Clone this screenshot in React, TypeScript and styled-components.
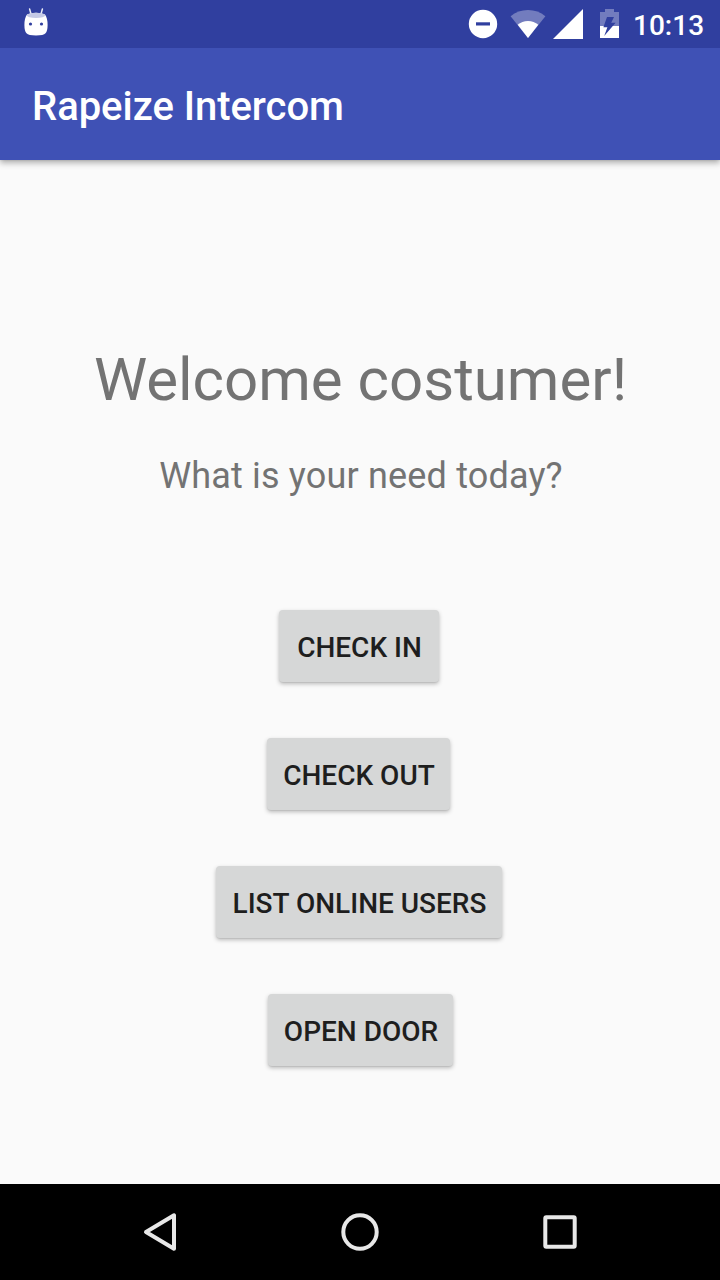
import React from 'react';
import styled, { createGlobalStyle } from 'styled-components';

const GlobalStyle = createGlobalStyle`
  body { margin: 0; background: #fafafa; }
  * { box-sizing: border-box; }
`;

const Screen = styled.div`
  width: 720px;
  height: 1280px;
  display: flex;
  flex-direction: column;
  overflow: hidden;
  background: #fafafa;
  font-family: Roboto, 'Liberation Sans', sans-serif;
`;

const StatusBar = styled.header`
  height: 48px;
  flex: none;
  z-index: 2;
  display: flex;
  justify-content: space-between;
  background: #303f9f;
  color: #fff;
`;

const StatusIcons = styled.svg`
  display: block;
  height: 48px;
  flex: none;
`;

const StatusGroup = styled.div`
  display: flex;
  padding-right: 16px;
`;

const Clock = styled.time`
  width: 71px;
  font-size: 28px;
  font-weight: 500;
  line-height: 52px;
  height: 48px;
  white-space: nowrap;
`;

const AppBar = styled.div`
  height: 112px;
  flex: none;
  z-index: 1;
  padding: 6px 32px 0;
  display: flex;
  align-items: center;
  background: #3f51b5;
  box-shadow: 0 3px 6px rgba(0, 0, 0, 0.3), 0 0 2px rgba(0, 0, 0, 0.12);
`;

const Title = styled.h1`
  margin: 0;
  color: #fff;
  font-size: 40px;
  font-weight: 500;
  line-height: 48px;
  letter-spacing: -0.04px;
`;

const Content = styled.main`
  flex: 1;
  display: flex;
  flex-direction: column;
  align-items: center;
  padding-top: 185px;
  color: #737373;
`;

const Heading = styled.h2`
  margin: 0;
  padding-left: 1px;
  font-size: 60px;
  font-weight: 400;
  line-height: 70px;
  white-space: nowrap;
`;

const Question = styled.p`
  margin: 40px 0 0;
  padding-left: 2px;
  font-size: 36px;
  line-height: 42px;
  letter-spacing: 0.17px;
  white-space: nowrap;
`;

const Actions = styled.div`
  align-self: stretch;
  display: flex;
  flex-direction: column;
  align-items: flex-start;
  gap: 56px;
  margin-top: 113px;
`;

const ActionButton = styled.button<{ $start: number; $width: number }>`
  width: ${({ $width }) => $width}px;
  height: 72px;
  margin: 0 0 0 ${({ $start }) => $start}px;
  padding: 4px 0 0 1px;
  border: 0;
  border-radius: 4px;
  background: #d6d7d7;
  color: #1e1e1e;
  box-shadow: 0 2px 4px rgba(0, 0, 0, 0.26), 0 1px 1px rgba(0, 0, 0, 0.06);
  font-family: inherit;
  font-size: 28px;
  font-weight: 500;
  line-height: 34px;
  white-space: nowrap;
`;

const NavBar = styled.nav`
  height: 96px;
  flex: none;
  display: flex;
  justify-content: center;
  align-items: center;
  gap: 152px;
  background: #000;
`;

const NavIcon = styled.svg`
  width: 48px;
  height: 48px;
  fill: none;
  stroke: #e8e8e8;
  stroke-width: 4;
  stroke-linejoin: round;
`;

const actions = [
  { label: 'CHECK IN', start: 279, width: 160 },
  { label: 'CHECK OUT', start: 267, width: 183 },
  { label: 'LIST ONLINE USERS', start: 216, width: 286 },
  { label: 'OPEN DOOR', start: 268, width: 185 },
];

export default function App() {
  return (
    <Screen>
      <GlobalStyle />
      <StatusBar>
        <StatusIcons width="60" viewBox="0 0 60 48">
          <path d="M31.3 15L29.6 9M40.7 15L42.4 9" stroke="#e8eaf5" strokeWidth="1.5" strokeLinecap="round" />
          <path d="M27 14.5Q36 11 45 14.5Q47.6 18 47.6 25Q47.6 31 45.5 33.3Q43.5 35.5 36 35.5Q28.5 35.5 26.5 33.3Q24.4 31 24.4 25Q24.4 18 27 14.5Z" fill="#fff" />
          <ellipse cx="36" cy="15.3" rx="9.3" ry="2.6" fill="#c5cae6" />
          <circle cx="30.5" cy="24" r="1.6" fill="#303f9f" />
          <circle cx="41.5" cy="24" r="1.6" fill="#303f9f" />
        </StatusIcons>
        <StatusGroup>
          <StatusIcons width="173" viewBox="460 0 173 48">
            <circle cx="483" cy="24" r="14.2" fill="#fff" />
            <rect x="476" y="22.3" width="14" height="3.2" fill="#303f9f" />
            <path d="M528 38L510.6 16.2Q518 10 528 10T545.4 16.2Z" fill="#fff" fillOpacity="0.32" />
            <path d="M528 38L517.7 24.8Q522 21 528 21T538.3 24.8Z" fill="#fff" />
            <path d="M553 39L583 9V39Z" fill="#fff" />
            <path d="M600 12H605V9H614V12H619V26H600Z" fill="#fff" fillOpacity="0.32" />
            <path d="M600 26H619V38H600Z" fill="#fff" />
            <path d="M607 17H614L611.2 22.8H615.6L604.2 36L607.4 27.3H603.4Z" fill="#303f9f" />
          </StatusIcons>
          <Clock>10:13</Clock>
        </StatusGroup>
      </StatusBar>
      <AppBar>
        <Title>Rapeize Intercom</Title>
      </AppBar>
      <Content>
        <Heading>Welcome costumer!</Heading>
        <Question>What is your need today?</Question>
        <Actions>
          {actions.map(({ label, start, width }) => (
            <ActionButton key={label} type="button" $start={start} $width={width}>
              {label}
            </ActionButton>
          ))}
        </Actions>
      </Content>
      <NavBar>
        <NavIcon viewBox="136 1208 48 48" aria-label="Back">
          <path d="M146 1232L174 1215.3V1248.7Z" />
        </NavIcon>
        <NavIcon viewBox="336 1208 48 48" aria-label="Home">
          <circle cx="360" cy="1232" r="16.7" />
        </NavIcon>
        <NavIcon viewBox="536 1208 48 48" aria-label="Recent apps">
          <rect x="545.3" y="1217.3" width="29.4" height="29.4" rx="1" />
        </NavIcon>
      </NavBar>
    </Screen>
  );
}
